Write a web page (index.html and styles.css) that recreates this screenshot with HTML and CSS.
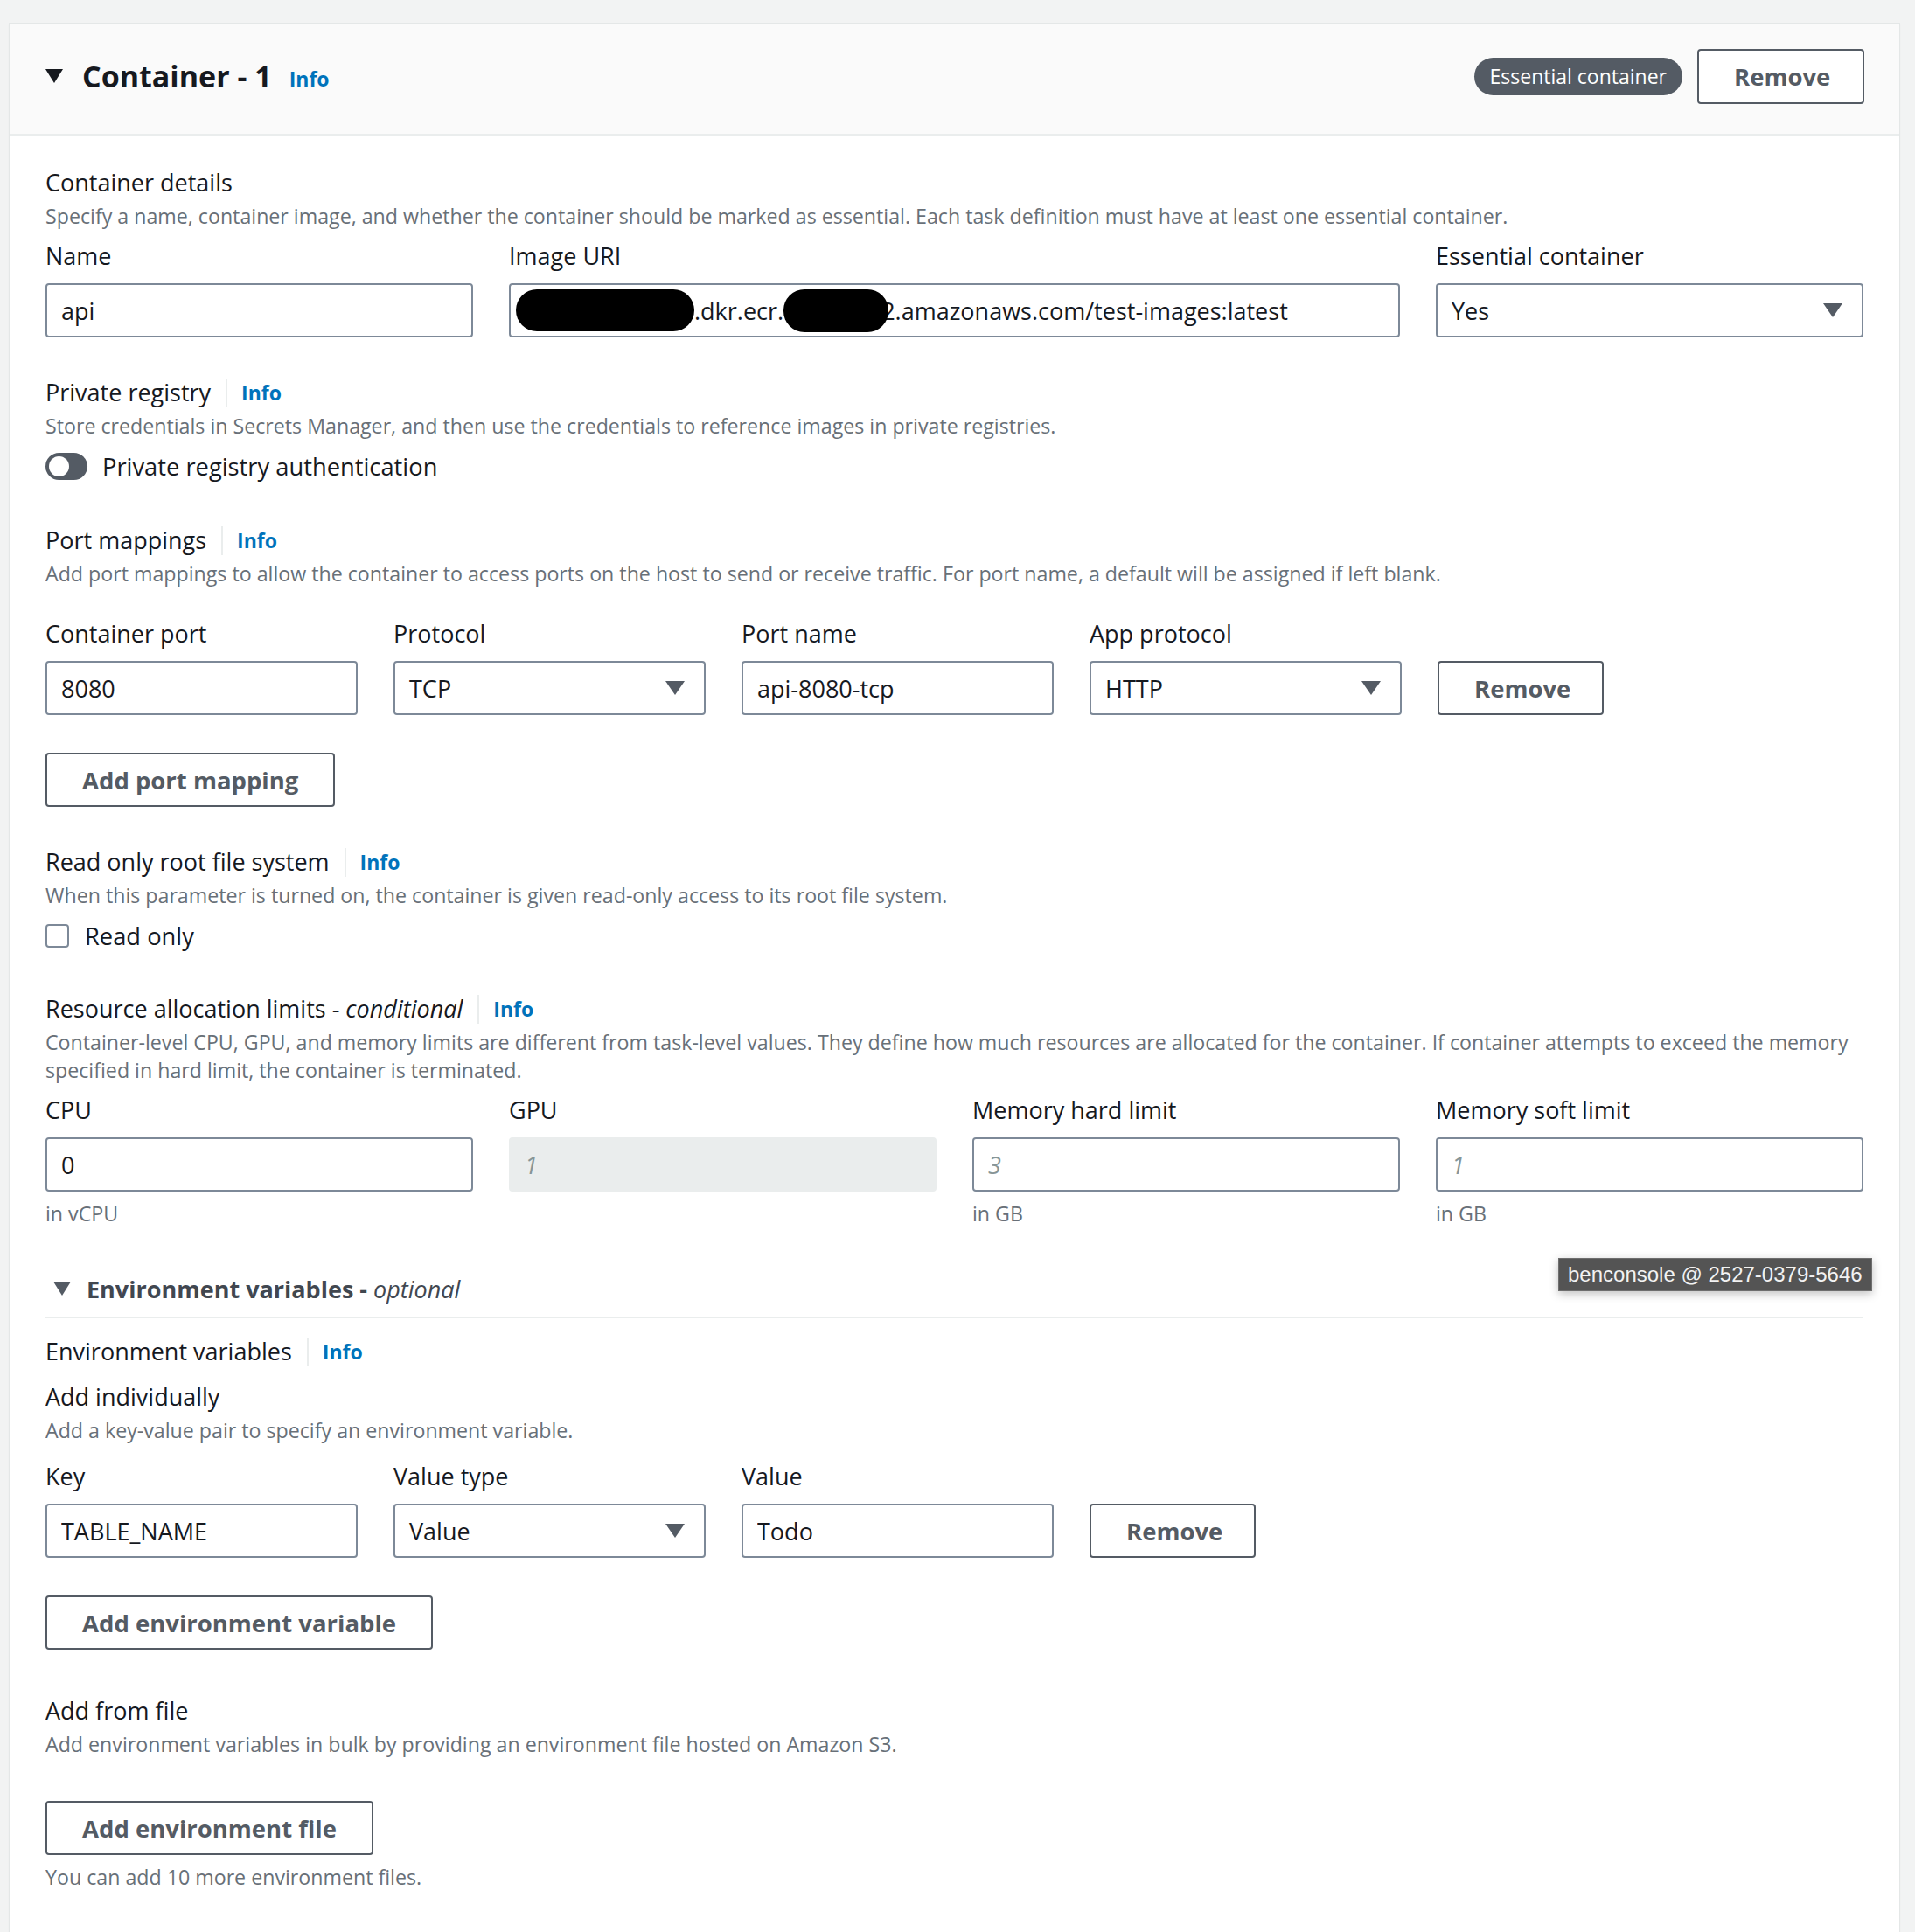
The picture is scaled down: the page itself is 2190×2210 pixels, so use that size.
FILE: index.html
```html
<!DOCTYPE html>
<html>
<head>
    <title>Container - 1</title>
    <link rel="stylesheet" href="styles.css">
</head>
<body>
    <div class="page">
        <div class="card">
            <div class="card-header">
                <div class="card-title">
                    <svg class="caret" width="20" height="16" viewBox="0 0 20 16"><polygon points="0,0 20,0 10,16" fill="#16191f"/></svg>
                    <h2>Container - 1</h2>
                    <a class="info" href="#">Info</a>
                </div>
                <div class="card-actions">
                    <span class="badge">Essential container</span>
                    <button class="btn btn-header">Remove</button>
                </div>
            </div>

            <div class="card-body">
                <!-- container details -->
                <div class="section first">
                    <div class="label-row"><span class="label">Container details</span></div>
                    <div class="desc">Specify a name, container image, and whether the container should be marked as essential. Each task definition must have at least one essential container.</div>
                    <div class="grid-4 fields">
                        <div class="field">
                            <label>Name</label>
                            <input type="text" value="api">
                        </div>
                        <div class="field span-2">
                            <label>Image URI</label>
                            <div class="input uri">
                                <span class="blot blot-a"></span><span>.dkr.ecr.</span><span class="blot blot-b"></span><span>2.amazonaws.com/test-images:latest</span>
                            </div>
                        </div>
                        <div class="field">
                            <label>Essential container</label>
                            <div class="input select">Yes<svg class="arrow" width="22" height="16" viewBox="0 0 22 16"><polygon points="0,0 22,0 11,16" fill="#545b64"/></svg></div>
                        </div>
                    </div>
                </div>

                <!-- private registry -->
                <div class="section">
                    <div class="label-row"><span class="label">Private registry</span><span class="sep"></span><a class="info" href="#">Info</a></div>
                    <div class="desc">Store credentials in Secrets Manager, and then use the credentials to reference images in private registries.</div>
                    <div class="toggle-row">
                        <span class="toggle"><span class="knob"></span></span>
                        <span>Private registry authentication</span>
                    </div>
                </div>

                <!-- port mappings -->
                <div class="section ports">
                    <div class="label-row"><span class="label">Port mappings</span><span class="sep"></span><a class="info" href="#">Info</a></div>
                    <div class="desc">Add port mappings to allow the container to access ports on the host to send or receive traffic. For port name, a default will be assigned if left blank.</div>
                    <div class="row-editor port-row">
                        <div class="field">
                            <label>Container port</label>
                            <input type="text" value="8080">
                        </div>
                        <div class="field">
                            <label>Protocol</label>
                            <div class="input select">TCP<svg class="arrow" width="22" height="16" viewBox="0 0 22 16"><polygon points="0,0 22,0 11,16" fill="#545b64"/></svg></div>
                        </div>
                        <div class="field">
                            <label>Port name</label>
                            <input type="text" value="api-8080-tcp">
                        </div>
                        <div class="field">
                            <label>App protocol</label>
                            <div class="input select">HTTP<svg class="arrow" width="22" height="16" viewBox="0 0 22 16"><polygon points="0,0 22,0 11,16" fill="#545b64"/></svg></div>
                        </div>
                        <button class="btn btn-row">Remove</button>
                    </div>
                    <button class="btn btn-add">Add port mapping</button>
                </div>

                <!-- read only -->
                <div class="section">
                    <div class="label-row"><span class="label">Read only root file system</span><span class="sep"></span><a class="info" href="#">Info</a></div>
                    <div class="desc">When this parameter is turned on, the container is given read-only access to its root file system.</div>
                    <div class="check-row">
                        <span class="checkbox"></span>
                        <span>Read only</span>
                    </div>
                </div>

                <!-- resource limits -->
                <div class="section limits">
                    <div class="label-row"><span class="label">Resource allocation limits - <i>conditional</i></span><span class="sep"></span><a class="info" href="#">Info</a></div>
                    <div class="desc">Container-level CPU, GPU, and memory limits are different from task-level values. They define how much resources are allocated for the container. If container attempts to exceed the memory specified in hard limit, the container is terminated.</div>
                    <div class="grid-4 fields">
                        <div class="field">
                            <label>CPU</label>
                            <input type="text" value="0">
                            <div class="hint">in vCPU</div>
                        </div>
                        <div class="field">
                            <label>GPU</label>
                            <input type="text" placeholder="1" disabled>
                        </div>
                        <div class="field">
                            <label>Memory hard limit</label>
                            <input type="text" placeholder="3">
                            <div class="hint">in GB</div>
                        </div>
                        <div class="field">
                            <label>Memory soft limit</label>
                            <input type="text" placeholder="1">
                            <div class="hint">in GB</div>
                        </div>
                    </div>
                </div>

                <!-- environment variables -->
                <div class="expand">
                    <div class="expand-header">
                        <svg class="caret-sm" width="20" height="16" viewBox="0 0 20 16"><polygon points="0,0 20,0 10,16" fill="#545b64"/></svg>
                        <span>Environment variables - <i>optional</i></span>
                    </div>

                    <div class="env-body">
                        <div class="label-row"><span class="label">Environment variables</span><span class="sep"></span><a class="info" href="#">Info</a></div>

                        <div class="sub">
                            <div class="label-row"><span class="label">Add individually</span></div>
                            <div class="desc">Add a key-value pair to specify an environment variable.</div>
                            <div class="row-editor env-row">
                                <div class="field">
                                    <label>Key</label>
                                    <input type="text" value="TABLE_NAME">
                                </div>
                                <div class="field">
                                    <label>Value type</label>
                                    <div class="input select">Value<svg class="arrow" width="22" height="16" viewBox="0 0 22 16"><polygon points="0,0 22,0 11,16" fill="#545b64"/></svg></div>
                                </div>
                                <div class="field">
                                    <label>Value</label>
                                    <input type="text" value="Todo">
                                </div>
                                <button class="btn btn-row">Remove</button>
                            </div>
                            <button class="btn btn-add">Add environment variable</button>
                        </div>

                        <div class="sub from-file">
                            <div class="label-row"><span class="label">Add from file</span></div>
                            <div class="desc">Add environment variables in bulk by providing an environment file hosted on Amazon S3.</div>
                            <button class="btn btn-add btn-file">Add environment file</button>
                            <div class="hint">You can add 10 more environment files.</div>
                        </div>
                    </div>
                </div>
            </div>

            <div class="account-tip">benconsole @ 2527-0379-5646</div>
        </div>
    </div>
</body>
</html>
```

FILE: styles.css
```css
body {
    margin: 0;
    background: #f2f3f3;
    font-family: "Open Sans", sans-serif;
    color: #16191f;
}

.page {
    padding: 27px 18px 0 11px;
}

.card {
    position: relative;
    background: #fff;
    min-height: 2183px;
    box-shadow: 0 0 0 1px #e4e7e7, 0 1px 2px rgba(0, 28, 36, 0.15);
}

/* header */

.card-header {
    box-sizing: border-box;
    height: 128px;
    background: #fafafa;
    border-bottom: 2px solid #eaeded;
    display: flex;
    align-items: center;
    justify-content: space-between;
    padding: 0 40px 6px 41px;
}

.card-title {
    display: flex;
    align-items: center;
}

.caret {
    margin-right: 22px;
}

.card-title h2 {
    margin: 0 20px 0 0;
    font-size: 34px;
    font-weight: 700;
    line-height: 44px;
}

.card-title .info {
    margin-top: 6px;
}

.card-actions {
    display: flex;
    align-items: center;
    gap: 17px;
}

.badge {
    height: 43px;
    line-height: 43px;
    padding: 0 18px;
    border-radius: 22px;
    background: #545b64;
    color: #fff;
    font-size: 23px;
}

/* buttons */

.btn {
    font-family: "Open Sans", sans-serif;
    font-size: 27.5px;
    font-weight: 700;
    color: #545b64;
    background: #fff;
    border: 2px solid #545b64;
    border-radius: 4px;
    height: 63px;
    padding: 0 40px;
    cursor: pointer;
}

.btn-header {
    width: 191px;
}

.btn-row {
    width: 190px;
    height: 62px;
    align-self: flex-end;
}

.btn-add {
    display: block;
    margin-top: 43px;
    height: 62px;
}

/* body */

.card-body {
    padding: 36px 41px 40px;
}

.section {
    margin-top: 45px;
}

.section.first {
    margin-top: 0;
}

.section.ports {
    margin-top: 49px;
}

.section.limits {
    margin-top: 48px;
}

.label-row {
    display: flex;
    align-items: center;
    height: 36px;
}

.label {
    font-size: 27px;
    line-height: 36px;
}

.sep {
    width: 2px;
    height: 33px;
    background: #eaeded;
    margin: 0 16px 0 17px;
}

.info {
    font-size: 23px;
    font-weight: 700;
    color: #0073bb;
    text-decoration: none;
}

.desc {
    margin-top: 4px;
    font-size: 23.2px;
    line-height: 32px;
    color: #687078;
}

.hint {
    margin-top: 9px;
    font-size: 23.2px;
    line-height: 32px;
    color: #687078;
}

/* form fields */

.grid-4 {
    display: grid;
    grid-template-columns: repeat(4, 1fr);
    column-gap: 41px;
}

.fields {
    margin-top: 12px;
}

.span-2 {
    grid-column: span 2;
}

.field {
    display: flex;
    flex-direction: column;
}

.field label {
    font-size: 27px;
    line-height: 36px;
    margin-bottom: 13px;
}

input[type="text"], .input {
    box-sizing: border-box;
    height: 62px;
    width: 100%;
    border: 2px solid #7d8998;
    border-radius: 4px;
    padding: 0 16px;
    font-family: "Open Sans", sans-serif;
    font-size: 27px;
    color: #16191f;
    background: #fff;
}

input::placeholder {
    font-style: italic;
    color: #879596;
}

input:disabled {
    background: #eaeded;
    border-color: #eaeded;
}

.input {
    display: flex;
    align-items: center;
}

.select {
    justify-content: space-between;
    padding-right: 22px;
}

.uri {
    padding-left: 6px;
    white-space: nowrap;
    overflow: hidden;
}

.blot {
    display: inline-block;
    background: #000;
    border-radius: 24px;
    position: relative;
    z-index: 1;
}

.blot-a {
    width: 204px;
    height: 48px;
}

.blot-b {
    width: 120px;
    height: 49px;
    margin-right: -8px;
}

/* toggles and checkboxes */

.toggle-row, .check-row {
    display: flex;
    align-items: center;
    margin-top: 12px;
    height: 36px;
    font-size: 27.3px;
}

.toggle {
    width: 48px;
    height: 31px;
    border-radius: 16px;
    background: #545b64;
    margin-right: 17px;
    display: flex;
    align-items: center;
}

.knob {
    width: 23px;
    height: 23px;
    margin-left: 4px;
    border-radius: 50%;
    background: #fff;
}

.checkbox {
    box-sizing: border-box;
    width: 27px;
    height: 27px;
    border: 2px solid #7d8998;
    border-radius: 4px;
    margin-right: 18px;
}

/* attribute editor rows */

.row-editor {
    display: flex;
    gap: 41px;
}

.port-row {
    margin-top: 35px;
}

.row-editor .field {
    width: 357px;
}

/* environment variables */

.expand {
    margin-top: 52px;
}

.expand-header {
    display: flex;
    align-items: center;
    height: 36px;
    font-size: 27px;
    font-weight: 700;
    color: #414750;
    padding-bottom: 14px;
    border-bottom: 2px solid #eaeded;
}

.expand-header i {
    font-weight: 400;
}

.caret-sm {
    margin: 0 18px 0 9px;
}

.env-body {
    padding-top: 20px;
}

.sub {
    margin-top: 16px;
}

.env-row {
    margin-top: 19px;
}

.from-file {
    margin-top: 52px;
}

.btn-file {
    margin-top: 49px;
}

/* account tooltip */

.account-tip {
    position: absolute;
    left: 1771px;
    top: 1412px;
    height: 38px;
    line-height: 36px;
    box-sizing: border-box;
    padding: 0 10px;
    background: #545454;
    border: 1px solid #6e6e6e;
    color: #f2f2f2;
    font-family: "Liberation Sans", sans-serif;
    font-size: 24px;
    box-shadow: 0 3px 10px rgba(0, 0, 0, 0.25);
}
```
